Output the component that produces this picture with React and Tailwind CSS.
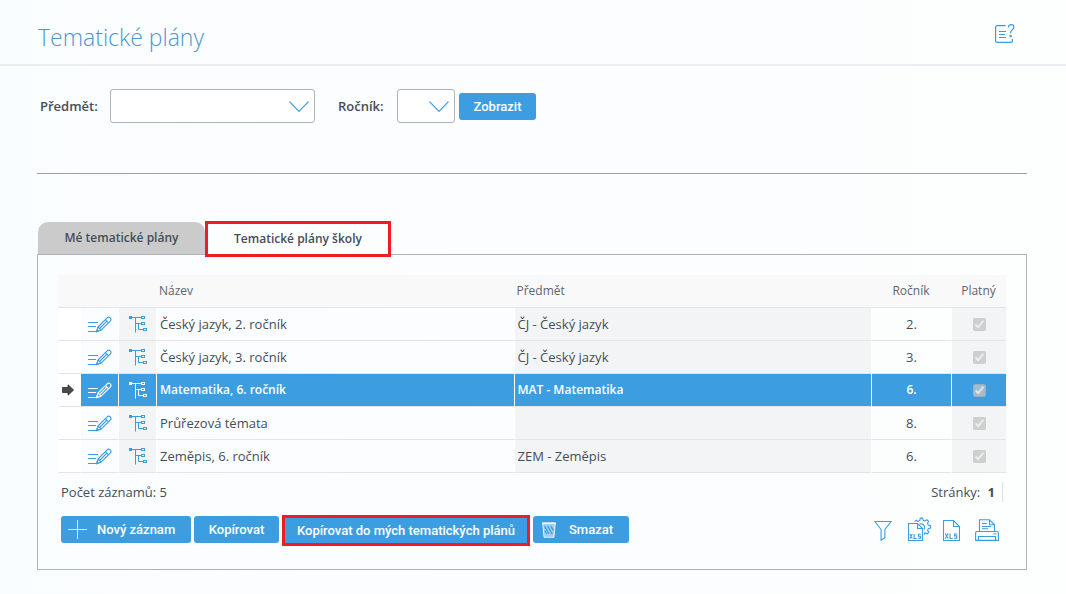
import React from "react";

const rows = [
  { id: 1, name: "Český jazyk, 2. ročník", subject: "ČJ - Český jazyk", grade: "2." },
  { id: 2, name: "Český jazyk, 3. ročník", subject: "ČJ - Český jazyk", grade: "3." },
  { id: 3, name: "Matematika, 6. ročník", subject: "MAT - Matematika", grade: "6.", selected: true },
  { id: 4, name: "Průřezová témata", subject: "", grade: "8." },
  { id: 5, name: "Zeměpis, 6. ročník", subject: "ZEM - Zeměpis", grade: "6." },
];

function HelpIcon() {
  return (
    <svg width="20" height="20" viewBox="0 0 20 20" fill="none" stroke="#3a9de0" strokeWidth="1.2" aria-hidden="true">
      <path d="M10.5 1.6H2.5Q.6 1.6.6 3.5V16.5Q.6 18.4 2.5 18.4H15.5Q17.4 18.4 17.4 16.5V15" />
      <path d="M4 7.5H11M4 10.5H10M4 13.5H11" />
      <path d="M13.4 3.4Q13.6.6 16.2.6Q18.8.6 18.8 3.2Q18.8 4.8 17 6Q15.6 7 15.6 9.2" />
      <circle cx="15.6" cy="12" r="1.2" fill="#3a9de0" stroke="none" />
    </svg>
  );
}

function EditIcon() {
  return (
    <svg width="24" height="17" viewBox="0 0 24 17" fill="none" stroke="currentColor" strokeWidth="1.1" aria-hidden="true">
      <path d="M0 6.5H10M0 10.5H8M0 15.5H8" />
      <path d="M8.6 15.6L10 11L19.2 1.8Q20.6.4 22.2 1.8Q23.8 3.4 22.4 4.9L13.1 14.2Z" strokeLinejoin="round" />
      <path d="M10 11L13.1 14.2M17.4 3.6L20.6 6.8M11.6 12.5L18.9 5.2" />
      <path d="M8.6 15.6L9.1 14L10.2 15.1Z" fill="currentColor" />
    </svg>
  );
}

function TreeIcon() {
  return (
    <svg width="18" height="18" viewBox="0 0 18 18" fill="none" stroke="currentColor" aria-hidden="true">
      <path d="M3 2.5H12M6.5 2.5V17.5M9.5 8.5V14.5H14M6.5 8.5H12" />
      <rect x="0" y="1" width="3" height="3" fill="currentColor" stroke="none" />
      <rect x="12.5" y="1.5" width="3" height="2" />
      <rect x="12.5" y="7.5" width="3" height="2" />
      <rect x="14.5" y="13.5" width="3" height="2" />
    </svg>
  );
}

function ArrowIcon() {
  return (
    <svg width="12" height="12" viewBox="0 0 12 12" aria-label="Vybraný řádek">
      <path d="M.5 3.5H6V.8L11.6 6L6 11.2V8.5H.5Z" fill="#4a4a4a" stroke="#2b2b2b" strokeWidth=".8" />
    </svg>
  );
}

function FilterIcon() {
  return (
    <svg width="18" height="21" viewBox="0 0 18 21" fill="none" stroke="currentColor" strokeWidth="1.1" strokeLinejoin="round" aria-hidden="true">
      <path d="M.8 1.5H17.2L10.9 9.5V17.5L7.1 20.4V9.5Z" />
    </svg>
  );
}

function XlsIcon() {
  return (
    <svg width="17" height="21" viewBox="0 0 17 21" fill="none" stroke="currentColor" strokeWidth="1.1" aria-hidden="true">
      <path d="M.5.5H10.5L16.5 6.5V20.5H.5ZM10.5.5V6.5H16.5" />
      <path d="M2.2 13.5L5.2 18.5M5.2 13.5L2.2 18.5M7 13.5V18.3H9.8M14.3 14H11.6V15.9H13.8V18.2H11" />
    </svg>
  );
}

function XlsSettingsIcon() {
  return (
    <svg width="24" height="24" viewBox="0 0 24 24" fill="none" stroke="currentColor" strokeWidth="1.1" aria-hidden="true">
      <path d="M.5 6.5H9.5L14.5 11.5V23.5H.5ZM9.5 6.5V11.5H14.5" />
      <path d="M1.8 17L4.3 21.5M4.3 17L1.8 21.5M6.1 17V21.5H8.6M12.8 17.3H10.5V19.2H12.6V21.2H10" />
      <path d="M6.8 4.6L8.2 3.2L9.9 4.4L11.8 3.5L12.3 1.1H14.7L15.2 3.3L17 4L18.9 2.7L20.6 4.4L19.5 6.3L20.3 8.1L22.6 8.7V11L20.4 11.5L19.6 13.4L20.8 15.3L19.1 17L17.2 15.8L16.6 16V17.8" />
      <path d="M11.5 7Q15.5 6 16.6 9.8Q16.8 11.4 16 12.6" />
    </svg>
  );
}

function PrintIcon() {
  return (
    <svg width="24" height="22" viewBox="0 0 24 22" fill="none" stroke="currentColor" strokeWidth="1.1" aria-hidden="true">
      <path d="M4.5 12.5V.8H14.5L19.5 5.8V12.5M14.5.8V5.8H19.5" />
      <path d="M7 4.5H12M7 7.5H16M7 9.8H13" />
      <path d="M4.5 12.5H2Q.6 12.5.6 14V21.4H23.4V14Q23.4 12.5 22 12.5H19.5M4.5 12.5H19.5M3.5 21.4V17.5H20.5V21.4M18.5 15H21.5" />
    </svg>
  );
}

function PlusIcon() {
  return (
    <svg width="19" height="19" viewBox="0 0 19 19" stroke="#ffffff" strokeOpacity=".8" aria-hidden="true">
      <path d="M9.5 0V19M0 9.5H19" />
    </svg>
  );
}

function TrashIcon() {
  return (
    <svg width="14" height="16" viewBox="0 0 14 16" fill="none" stroke="#ffffff" strokeOpacity=".8" aria-hidden="true">
      <path d="M.7 1H13.3L12 15.3H2Z" fill="#ffffff" fillOpacity=".5" />
      <path d="M0 1.2H14" strokeWidth="1.4" />
      <path d="M2.4 4L7 12M5.6 4L10.2 12M8.8 4L11.4 8.6M2.8 8.8L4.6 12" stroke="#3a9de0" strokeWidth="1.3" strokeOpacity="1" />
    </svg>
  );
}

function SelectBox({ id, className }) {
  return (
    <div className={`relative ${className}`}>
      <select id={id} className="h-[34px] w-full appearance-none rounded-[3px] border border-[#aab4bf] bg-white px-2 text-sm">
        <option value=""></option>
      </select>
      <svg className="pointer-events-none absolute top-3 right-1.5" width="20" height="12" viewBox="0 0 20 12" fill="none" stroke="#3a9de0" strokeWidth="1.2" aria-hidden="true">
        <path d="M.5.7L10 10.4L19.5.7" />
      </svg>
    </div>
  );
}

const buttonClass =
  "flex items-center rounded-[3px] bg-[#3c9ee1] font-[Roboto,sans-serif] text-[13px] leading-4 font-medium text-white";

export default function App() {
  return (
    <div className="min-h-screen bg-linear-to-r from-[#fafdff] to-[#fdfefe] pb-6 font-['Open_Sans','Noto_Sans',sans-serif] text-[13px] leading-5 text-[#444e58]">
      <header className="flex h-[66px] items-center justify-between border-b-2 border-[#ebeef0] pr-[51px] pl-[38px]">
        <h1 className="pt-2.5 text-[23px] leading-8 font-light text-[#4a97cf]">Tematické plány</h1>
        <button type="button" aria-label="Nápověda" className="pt-1">
          <HelpIcon />
        </button>
      </header>

      <main className="pr-[39px] pl-[37px]">
        <form className="flex h-[108px] items-start border-b border-[#a0a0a0] pt-[23px] pl-[3px]">
          <label htmlFor="subject" className="w-[70px] pt-[7px] font-semibold">Předmět:</label>
          <SelectBox id="subject" className="w-[205px]" />
          <label htmlFor="grade" className="ml-[23px] w-[59px] pt-[7px] font-semibold">Ročník:</label>
          <SelectBox id="grade" className="w-[58px]" />
          <button type="button" className={`${buttonClass} mt-1 ml-1 h-[27px] w-[77px] justify-center`}>Zobrazit</button>
        </form>

        <div role="tablist" className="relative -mb-[3px] flex items-start pt-[47px] pl-px text-xs font-semibold">
          <button type="button" role="tab" aria-selected="false" className="mt-px h-8 w-[167px] rounded-t-[10px] bg-[#cbcbcb]">
            Mé tematické plány
          </button>
          <button type="button" role="tab" aria-selected="true" className="h-9 w-[186px] border-3 border-[#ee1c25] bg-[#fcfdff]">
            Tematické plány školy
          </button>
        </div>

        <section className="border border-[#aab4bc] px-5 pt-5 pb-[23px]">
          <table className="w-full table-fixed border-separate border-spacing-0">
            <colgroup>
              <col className="w-[22px]" />
              <col className="w-[38px]" />
              <col className="w-[38px]" />
              <col />
              <col />
              <col className="w-20" />
              <col className="w-[55px]" />
            </colgroup>
            <thead>
              <tr className="h-[33px] bg-[#f9f9fa] text-xs text-[#5d6670] *:border-b *:border-[#e2e4e6] *:p-0 *:font-normal">
                <th></th>
                <th></th>
                <th></th>
                <th className="text-left"><span className="pl-[3px]">Název</span></th>
                <th className="text-left"><span className="pl-[3px]">Předmět</span></th>
                <th>Ročník</th>
                <th>Platný</th>
              </tr>
            </thead>
            <tbody>
              {rows.map((r) => {
                const plain = r.selected ? "bg-[#3c9ee1]" : "";
                const shade = r.selected ? "bg-[#3c9ee1]" : "bg-[#f3f4f6]";
                return (
                  <tr
                    key={r.id}
                    className={`h-[33px] *:border-b *:border-l *:border-b-[#e2e4e6] *:border-l-white *:p-0 ${r.selected ? "text-xs font-semibold text-white" : ""}`}
                  >
                    <td className="bg-white">
                      {r.selected && <div className="flex pl-[3px]"><ArrowIcon /></div>}
                    </td>
                    <td className={plain}>
                      <button type="button" aria-label="Upravit" className={`mx-auto flex ${r.selected ? "text-white" : "text-[#3a9de0]"}`}>
                        <EditIcon />
                      </button>
                    </td>
                    <td className={shade}>
                      <button type="button" aria-label="Struktura" className={`mx-auto flex ${r.selected ? "text-white" : "text-[#3a9de0]"}`}>
                        <TreeIcon />
                      </button>
                    </td>
                    <td className={plain}><span className="pl-[3px]">{r.name}</span></td>
                    <td className={shade}><span className="pl-[3px]">{r.subject}</span></td>
                    <td className={`text-center ${plain}`}>{r.grade}</td>
                    <td className={shade}>
                      <input type="checkbox" checked disabled readOnly aria-label="Platný" className="mx-auto block size-[13px]" />
                    </td>
                  </tr>
                );
              })}
            </tbody>
          </table>

          <div className="flex items-center justify-between px-[3px] pt-[9px]">
            <span>Počet záznamů: 5</span>
            <span className="border-r border-[#dfe2e5] pr-[7px]">
              Stránky: <b className="ml-1 font-bold">1</b>
            </span>
          </div>

          <div className="flex items-start justify-between pt-[13px] pr-[7px] pl-[3px]">
            <div className="flex items-start gap-[3px]">
              <button type="button" className={`${buttonClass} mt-px h-[27px] w-[130px] gap-[10px] pl-[7px]`}>
                <PlusIcon />
                Nový záznam
              </button>
              <button type="button" className={`${buttonClass} mt-px h-[27px] w-[85px] justify-center`}>Kopírovat</button>
              <div className="border-3 border-[#ee1c25] bg-[#3c9ee1]">
                <button type="button" className={`${buttonClass} h-[25px] w-[242px] justify-center`}>
                  Kopírovat do mých tematických plánů
                </button>
              </div>
              <button type="button" className={`${buttonClass} mt-px h-[27px] w-24 gap-[13px] pl-[9px]`}>
                <TrashIcon />
                Smazat
              </button>
            </div>
            <div className="flex items-end pt-0.5 text-[#3a9de0]">
              <button type="button" aria-label="Filtr" className="mr-4"><FilterIcon /></button>
              <button type="button" aria-label="Nastavení exportu do XLS" className="mr-[11px]"><XlsSettingsIcon /></button>
              <button type="button" aria-label="Export do XLS" className="mr-[15px]"><XlsIcon /></button>
              <button type="button" aria-label="Tisk"><PrintIcon /></button>
            </div>
          </div>
        </section>
      </main>
    </div>
  );
}
